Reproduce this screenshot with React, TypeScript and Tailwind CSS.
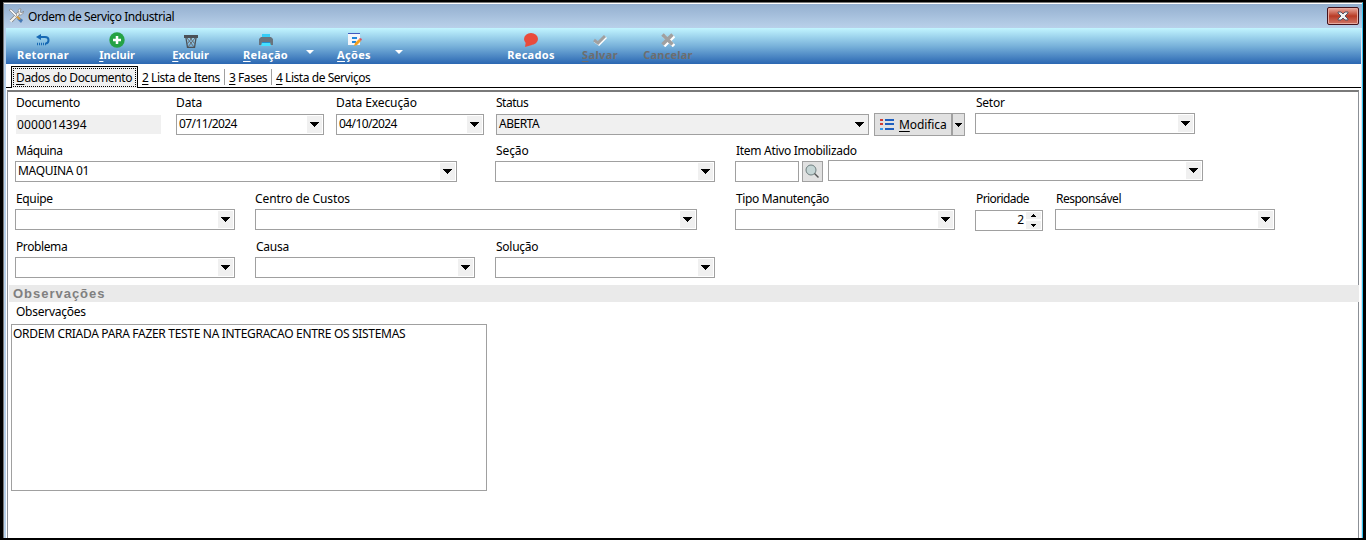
import React from "react";

function Label({ text, c = "pl-px tracking-[-0.25px]" }: { text: string; c?: string }) {
  return <div className={"h-[20px] text-[12px] leading-[20px] whitespace-nowrap " + c}>{text}</div>;
}

function Arrow() {
  return (
    <div className="flex h-[17px] w-[15px] shrink-0 items-center justify-center bg-[#f0f0f0]">
      <svg width="9" height="5" shapeRendering="crispEdges"><path d="M0 0h9v1h-1v1h-1v1h-1v1h-1v1h-1v-1h-1v-1h-1v-1h-1v-1h-1z" /></svg>
    </div>
  );
}

function Combo({ c, value = "", vc = "" }: { c: string; value?: string; vc?: string }) {
  return (
    <div className={"flex h-[21px] items-center justify-between border border-[#a0a0a0] pr-px " + c}>
      <span className={"-mt-px pl-[2px] text-[12px] leading-[18px] whitespace-nowrap " + vc}>{value}</span>
      <Arrow />
    </div>
  );
}

type FieldProps = { label: string; c: string; value?: string; vc?: string; lc?: string; bc?: string };

function Field({ label, c, value, vc, lc, bc = "" }: FieldProps) {
  return (
    <div className={"shrink-0 " + c}>
      <Label text={label} c={lc} />
      <Combo c={"w-full " + bc} value={value} vc={vc} />
    </div>
  );
}

function Tool({ t, u, c, children }: { t: string; u?: string; c: string; children: React.ReactNode }) {
  return (
    <div className={"flex h-full shrink-0 flex-col items-center pt-[4px] text-[11px] font-bold " + c}>
      <div className="flex h-[16px] items-center">{children}</div>
      <span className="leading-[13px] whitespace-nowrap">
        {u && <u className="underline-offset-2">{u}</u>}{t}
      </span>
    </div>
  );
}

function Drop({ c }: { c: string }) {
  return <svg className={"mt-[22px] h-[4px] w-[8px] shrink-0 " + c} viewBox="0 0 8 4"><path d="M0 0h8L4 4z" fill="#fff" /></svg>;
}

function Toolbar() {
  return (
    <div className="flex h-[36px] shrink-0 items-start bg-linear-to-b from-[#c2f5ff] via-[#79b2da] to-[#2b67b2]">
      <Tool t="Retornar" c="ml-[11px] w-[52px] text-white tracking-[0.35px]">
        <svg width="14" height="12" viewBox="0 0 14 12" fill="none">
          <path d="M5 0v6L0 3z" fill="#1769b4" />
          <path d="M4 3h5q3.500 0 3.500 3T10 9.500" stroke="#1769b4" strokeWidth="2" />
          <path d="M1 10h9" stroke="#1769b4" strokeWidth="2.500" strokeDasharray="1 1" />
        </svg>
      </Tool>
      <Tool t="ncluir" u="I" c="ml-[29px] w-[38px] text-white">
        <svg width="16" height="16"><circle cx="8" cy="8" r="7.700" fill="#25a244" /><path d="M8 4v8M4 8h8" stroke="#fff" strokeWidth="2.500" /></svg>
      </Tool>
      <Tool t="xcluir" u="E" c="ml-[35px] w-[39px] text-white">
        <svg className="mt-[2px]" width="14" height="13" viewBox="0 0 14 13" fill="none">
          <path d="M0 0h14v3H0z" fill="#4b5157" />
          <path d="M2 3l1.500 9.500h7L12 3" stroke="#4b5157" strokeWidth="1.300" />
          <path d="M3 3l7 9M11 3l-7 9M6 3l5 6M8 3L3 9" stroke="#656c72" />
        </svg>
      </Tool>
      <Tool t="elação" u="R" c="ml-[33px] w-[45px] text-white tracking-[0.3px]">
        <svg width="14" height="13" viewBox="0 0 14 13">
          <path d="M3 0h8v4H3z" fill="#35cdf7" /><path d="M2 3h10l2 2v6H0V5z" fill="#69737c" />
          <path d="M3 8h8l1 4H2z" fill="#45e0ff" /><path d="M3 8h8v1H3z" fill="#218ed0" />
        </svg>
      </Tool>
      <Drop c="ml-[18px]" />
      <Tool t="ções" u="A" c="ml-[23px] w-[34px] text-white tracking-[0.3px]">
        <svg width="15" height="14" viewBox="0 0 15 14">
          <path d="M1 0h12v12H1z" fill="#f3f5fa" /><path d="M1 0h12v1H1z" fill="#3f5ac0" />
          <path d="M5 4h5v2H5zM5 8h4v2H5z" fill="#2186db" />
          <path d="M7 13l1-3 4-4 2 2-4 4z" fill="#f6a01d" /><path d="M12 6l1-1 2 1-1 2z" fill="#df4d5a" />
        </svg>
      </Tool>
      <Drop c="ml-[24px]" />
      <Tool t="Recados" c="ml-[104px] w-[48px] text-white tracking-[0.3px]">
        <svg width="14" height="14" viewBox="0 0 14 14" fill="#e94b3c"><ellipse cx="7" cy="6" rx="7" ry="6" /><path d="M2 8l-1 6 7-2z" /></svg>
      </Tool>
      <Tool t="alvar" u="S" c="ml-[27px] w-[36px] text-[#6d6d6d] tracking-[0.4px]">
        <svg width="14" height="12" viewBox="0 0 14 12" fill="none" strokeWidth="3">
          <path d="M2 7l4 3 7-7" stroke="#fff" /><path d="M1 6l4 3 7-7" stroke="#a0a0a0" />
        </svg>
      </Tool>
      <Tool t="Cancelar" c="ml-[25px] w-[50px] text-[#6d6d6d] tracking-[0.2px]">
        <svg width="14" height="14" viewBox="0 0 14 14" fill="none" strokeWidth="3.500">
          <path d="M2 2l10 10M12 2L2 12" stroke="#fff" transform="translate(1 1)" /><path d="M1.500 1.500l10 10M11.500 1.500l-10 10" stroke="#a0a0a0" />
        </svg>
      </Tool>
    </div>
  );
}

function Tab({ u, t, c }: { u: string; t: string; c: string }) {
  return (
    <div className={"h-[16px] shrink-0 pl-[4px] text-[12px] leading-[18px] tracking-[-0.45px] whitespace-nowrap " + c}>
      <u className="underline-offset-2">{u}</u>{t}
    </div>
  );
}

function Tabs() {
  return (
    <div className="flex h-[26px] shrink-0 flex-col pt-[2px]">
      <div className="flex h-[22px] items-end">
        <div className="h-full w-[5px] shrink-0 border-b border-black" />
        <div className="h-full w-[127px] shrink-0 border border-b-0 border-black bg-[#f0f0f0] p-px">
          <div className="h-[19px] border border-dotted border-black pl-[2px] text-[12px] leading-[18px] tracking-[-0.38px] whitespace-nowrap">
            <u className="underline-offset-2">D</u>ados do Documento
          </div>
        </div>
        <div className="flex h-full flex-1 items-start border-b border-black pt-[3px]">
          <Tab u="2" t=" Lista de Itens" c="w-[87px] border-r border-[#a0a0a0]" />
          <Tab u="3" t=" Fases" c="w-[47px] border-r border-[#a0a0a0]" />
          <Tab u="4" t=" Lista de Serviços" c="w-[110px]" />
        </div>
      </div>
    </div>
  );
}

function Form() {
  return (
    <div className="flex flex-col pl-[7px]">
      <div className="flex h-[49px] pt-px">
        <div className="w-[146px] shrink-0">
          <Label text="Documento" />
          <div className="mt-[2px] ml-px h-[19px] bg-[#f0f0f0] pl-px text-[12px] leading-[20px] tracking-[0.1px]">0000014394</div>
        </div>
        <Field label="Data" lc="tracking-[-0.1px]" c="ml-[15px] w-[148px]" value="07/11/2024" vc="tracking-[-0.6px]" bc="mt-px" />
        <Field label="Data Execução" lc="tracking-[-0.1px]" c="ml-[12px] w-[148px]" value="04/10/2024" vc="tracking-[-0.6px]" bc="mt-px" />
        <Field label="Status" lc="tracking-[-0.5px]" c="ml-[12px] w-[373px]" value="ABERTA" vc="tracking-[-0.5px]" bc="mt-px bg-[#f0f0f0]" />
        <div className="mt-[20px] ml-[5px] flex h-[23px] w-[91px] shrink-0 border border-[#a0a0a0] bg-[#e1e1e1]">
          <div className="flex w-[78px] items-center border-r-2 border-[#a0a0a0] pl-[5px] text-[12px]">
            <svg width="14" height="11" shapeRendering="crispEdges">
              <path d="M0 0h3v2H0zM0 4h3v2H0z" fill="#d13c32" /><path d="M0 9h3v2H0z" fill="#3b9be8" /><path d="M5 0h9v2H5zM5 4h9v2H5zM5 9h9v2H5z" fill="#1f5fbe" />
            </svg>
            <span className="ml-[5px] tracking-[-0.1px]"><u className="underline-offset-2">M</u>odifica</span>
          </div>
          <div className="flex flex-1 items-center justify-center"><svg width="7" height="4" shapeRendering="crispEdges"><path d="M0 0h7v1h-1v1h-1v1h-1v1h-1v-1h-1v-1h-1v-1h-1z" /></svg></div>
        </div>
        <Field label="Setor" c="ml-[10px] w-[220px]" />
      </div>
      <div className="flex h-[48px]">
        <Field label="Máquina" lc="pl-px tracking-[-0.45px]" c="w-[442px]" value="MAQUINA 01" vc="tracking-[-0.3px]" />
        <Field label="Seção" lc="pl-px tracking-[-0.1px]" c="ml-[38px] w-[220px]" />
        <div className="ml-[20px] shrink-0">
          <Label text="Item Ativo Imobilizado" c="pl-px tracking-[-0.3px]" />
          <div className="flex">
            <div className="h-[21px] w-[64px] border border-[#a0a0a0]" />
            <div className="ml-[3px] flex h-[21px] w-[21px] items-center justify-center border border-[#a0a0a0] bg-[#e1e1e1]">
              <svg width="15" height="15" fill="none"><circle cx="6" cy="6" r="5" fill="#c5d5d5" stroke="#6f7f80" /><path d="M9.500 9.500L13.500 13.500" stroke="#555" strokeWidth="1.500" /></svg>
            </div>
            <Combo c="-mt-px ml-[5px] w-[375px]" />
          </div>
        </div>
      </div>
      <div className="flex h-[48px]">
        <Field label="Equipe" lc="pl-px tracking-[-0.35px]" c="w-[220px]" />
        <Field label="Centro de Custos" lc="tracking-[-0.1px]" c="ml-[20px] w-[442px]" />
        <Field label="Tipo Manutenção" lc="pl-px tracking-[-0.35px]" c="ml-[38px] w-[220px]" />
        <div className="ml-[20px] w-[68px] shrink-0">
          <Label text="Prioridade" c="pl-px tracking-[-0.6px]" />
          <div className="mt-px flex h-[21px] items-center justify-end border border-[#a0a0a0] pr-px text-[12px]">
            <span className="-mt-[2px]">2</span>
            <div className="ml-[2px] flex w-[15px] flex-col items-center gap-[2px]">
              <div className="flex h-[7px] w-full items-center justify-center bg-[#f0f0f0]"><svg width="5" height="3" shapeRendering="crispEdges"><path d="M2 0h1v1h1v1h1v1H0V2h1V1h1z" /></svg></div>
              <div className="flex h-[8px] w-full items-center justify-center bg-[#f0f0f0]"><svg width="5" height="3" shapeRendering="crispEdges"><path d="M0 0h5v1H4v1H3v1H2V2H1V1H0z" /></svg></div>
            </div>
          </div>
        </div>
        <Field label="Responsável" lc="pl-px tracking-[-0.5px]" c="ml-[12px] w-[220px]" />
      </div>
      <div className="flex h-[48px]">
        <Field label="Problema" lc="pl-px tracking-[-0.4px]" c="w-[220px]" />
        <Field label="Causa" c="ml-[20px] w-[220px]" />
        <Field label="Solução" c="ml-[20px] w-[220px]" />
      </div>
    </div>
  );
}

export default function App() {
  return (
    <div className="flex h-[540px] w-[1366px] flex-col overflow-hidden bg-black pt-[2px] pr-[3px] pb-[2px] pl-[3px] font-['Noto_Sans',sans-serif] text-black">
      <div className="flex min-h-0 flex-1 flex-col border-x border-t border-[#777] border-r-[#35c5f0]">
        <div className="flex h-[25px] shrink-0 items-center border-t border-white bg-linear-to-b from-[#94afcf] to-[#b9d1ea] pr-[3px] pl-[4px]">
          <svg width="16" height="16" viewBox="0 0 16 16">
            <path d="M3 13L12 4" stroke="#777" strokeWidth="3.600" />
            <path d="M2.500 13.500L12 4" stroke="#f0f0ec" strokeWidth="2.400" />
            <path d="M10 2a3.500 3.500 0 0 1 3-1l-1 3 2 1 1.500-2a3.500 3.500 0 0 1-4 4z" fill="#f4f4f4" stroke="#777" strokeWidth=".6" />
            <path d="M1 2l2-1 6 6-1.500 1.500z" fill="#f4f4f4" stroke="#777" strokeWidth=".6" />
            <path d="M9 11l2-2 4 3-2 3z" fill="#4779b5" /><path d="M8 9l2-1 3 3-2 1z" fill="#d99b3b" />
          </svg>
          <span className="ml-[4px] pt-px text-[12px] tracking-[-0.43px]">Ordem de Serviço Industrial</span>
          <div className="ml-auto flex h-[18px] w-[32px] items-center justify-center rounded-[2px] border border-[#43121c] bg-linear-to-b from-[#e9a99f] from-0% via-[#b83a25] via-50% to-[#cf7566] shadow-[inset_0_0_0_1px_#e6aaa0]">
            <svg width="12" height="10" viewBox="0 0 12 10"><path d="M1 1h3l2 2 2-2h3v1L8 5l3 3v1H8L6 7 4 9H1V8l3-3-3-3z" fill="#f2f2f2" stroke="#535666" /></svg>
          </div>
        </div>
        <div className="flex min-h-0 flex-1 flex-col border-r border-l-2 border-l-[#b9d1ea] border-r-[#dfe7f5] bg-white">
          <Toolbar />
          <Tabs />
          <div className="mr-[2px] ml-px flex min-h-0 flex-1 flex-col border-x border-t-2 border-x-[#8c9096] border-t-[#7a7a7a]">
            <Form />
            <div className="-mr-px ml-px h-[17px] shrink-0 bg-[#eaeaea] pl-[4px] font-['Liberation_Sans',Arial,sans-serif] text-[13px] leading-[17px] font-bold tracking-[0.98px] text-[#808080]">Observações</div>
            <div className="pl-[7px]"><Label text="Observações" /></div>
            <div className="mt-[2px] ml-[3px] h-[167px] w-[476px] shrink-0 border border-[#a0a0a0] pl-px text-[12px] leading-[17px] tracking-[-0.31px]">
              ORDEM CRIADA PARA FAZER TESTE NA INTEGRACAO ENTRE OS SISTEMAS
            </div>
          </div>
        </div>
      </div>
    </div>
  );
}
